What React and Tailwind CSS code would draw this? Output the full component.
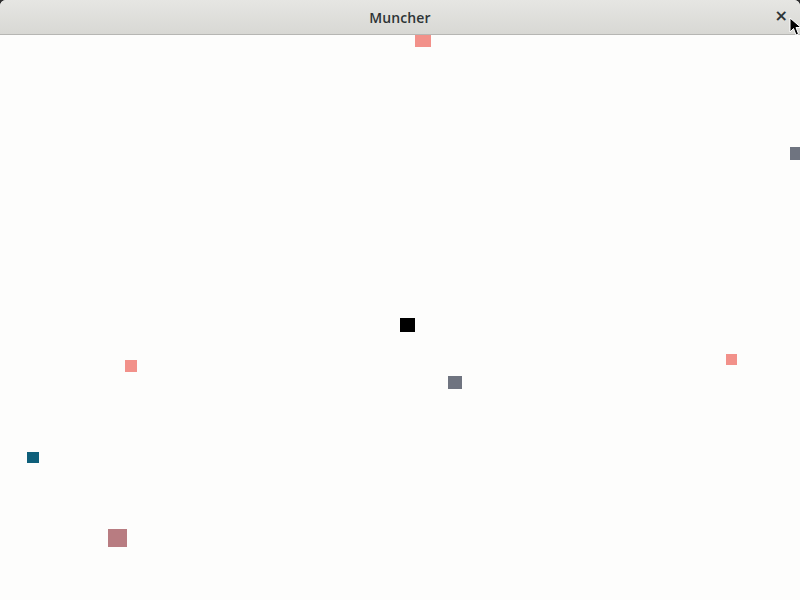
// Muncher game window: title bar + free canvas of blocks
const blocks = [
  { x: 415, y: 35, w: 16, h: 12, color: '#f2918a' },
  { x: 790, y: 147, w: 10, h: 13, color: '#6f7480' },
  { x: 400, y: 318, w: 15, h: 14, color: '#000000' },
  { x: 726, y: 354, w: 11, h: 11, color: '#f2918a' },
  { x: 125, y: 360, w: 12, h: 12, color: '#f2918a' },
  { x: 448, y: 376, w: 14, h: 13, color: '#6f7480' },
  { x: 27, y: 452, w: 12, h: 11, color: '#0e5f7a' },
  { x: 108, y: 529, w: 19, h: 18, color: '#b87c81' },
]

function Cursor() {
  return (
    <svg className="absolute left-[789px] top-[17px] z-20" width="13" height="20" viewBox="0 0 13 20">
      <path d="M1 1 L1 15 L4.5 11.5 L7 18 L9.5 17 L7 10.5 L12 10.5 Z" fill="#000" stroke="#fff" strokeWidth="1" />
    </svg>
  )
}

export default function App() {
  return (
    <div className="relative w-[800px] h-[600px] overflow-hidden bg-[#2e2e2e]">
      <div className="flex flex-col h-full rounded-t-[6px] overflow-hidden bg-[#fdfdfc]">
        {/* Title bar */}
        <div className="relative z-10 h-[35px] shrink-0 flex items-center justify-center bg-gradient-to-b from-[#e6e6e3] to-[#d8d8d4] border-b border-[#b6b6b3]">
          <span className="text-[14px] font-semibold text-[#2e3436] font-['Open_Sans',sans-serif] tracking-[0.1px]">Muncher</span>
          <span className="absolute right-[12px] top-[8px] text-[16px] leading-none font-bold text-[#2e3436] font-['DejaVu_Sans',sans-serif]">×</span>
        </div>
        {/* Canvas */}
        <div className="relative flex-1" />
      </div>
      {blocks.map((b, i) => (
        <div
          key={i}
          className="absolute"
          style={{ left: b.x, top: b.y, width: b.w, height: b.h, background: b.color }}
        />
      ))}
      <Cursor />
    </div>
  )
}
